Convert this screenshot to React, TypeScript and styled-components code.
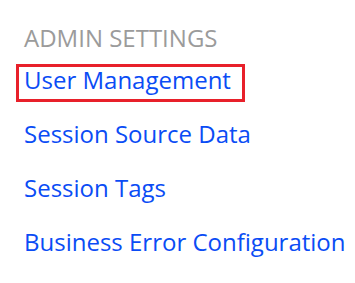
import styled, { createGlobalStyle } from "styled-components";

const GlobalStyle = createGlobalStyle`
  html, body {
    margin: 0;
    padding: 0;
    background: #ffffff;
  }
`;

const Panel = styled.nav`
  display: flex;
  flex-direction: column;
  align-items: flex-start;
  padding: 24px 0 0 16px;
  overflow: hidden;
  font-family: "Open Sans", "Noto Sans", sans-serif;
  font-size: 24px;
`;

const Heading = styled.h2`
  margin: 0 0 12px 8px;
  font-size: 24px;
  font-weight: 400;
  line-height: 28px;
  color: #9b9b9b;
  text-transform: uppercase;
`;

const LinkItem = styled.a<{ $selected?: boolean }>`
  display: block;
  padding: 0 11px 6px 5px;
  margin-bottom: 16px;
  line-height: 26px;
  white-space: nowrap;
  color: #0a4cf5;
  text-decoration: none;
  border: 3px solid ${(p) => (p.$selected ? "#e8202a" : "transparent")};
`;

const links = [
  "User Management",
  "Session Source Data",
  "Session Tags",
  "Business Error Configuration",
];

export default function App() {
  return (
    <>
      <GlobalStyle />
      <Panel>
        <Heading>Admin Settings</Heading>
        {links.map((label, i) => (
          <LinkItem key={label} href="#" $selected={i === 0}>
            {label}
          </LinkItem>
        ))}
      </Panel>
    </>
  );
}
